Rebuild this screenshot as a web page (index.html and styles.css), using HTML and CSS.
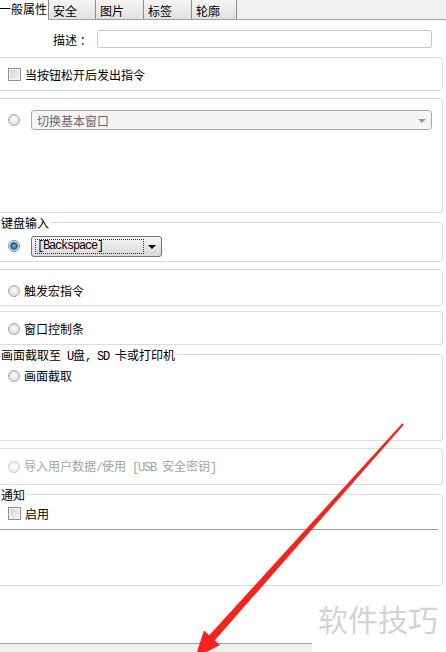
FILE: index.html
```html
<!DOCTYPE html>
<html lang="zh-CN">
<head>
<meta charset="utf-8">
<title>一般属性</title>
<link rel="stylesheet" href="styles.css">
</head>
<body>
<div class="page">
  <div class="tabbar">
    <div class="tab active">一般属性</div>
    <div class="tab t1">安全</div>
    <div class="tab t2">图片</div>
    <div class="tab t3">标签</div>
    <div class="tab t4 last">轮廓</div>
  </div>

  <div class="panel">
    <div class="desc-row">
      <span class="desc-label">描述 ：</span>
      <span class="textbox"></span>
    </div>

    <div class="group g-release">
      <div class="row"><span class="checkbox"></span><span>当按钮松开后发出指令</span></div>
    </div>

    <div class="group g-window">
      <div class="row row-select">
        <span class="radio"></span>
        <div class="select select-wide">切换基本窗口<span class="tri tri-gray"></span></div>
      </div>
    </div>

    <fieldset class="fs fs-kb">
      <legend>键盘输入</legend>
      <div class="row row-select">
        <span class="radio on"></span>
        <div class="select select-kb"><span class="focus"><span class="asc">[Backspace]</span></span><span class="tri tri-black"></span></div>
      </div>
    </fieldset>

    <div class="group g-macro">
      <div class="row"><span class="radio"></span><span>触发宏指令</span></div>
    </div>

    <div class="group g-ctrl">
      <div class="row"><span class="radio"></span><span>窗口控制条</span></div>
    </div>

    <fieldset class="fs fs-shot">
      <legend>画面截取至<span class="asc"> U</span>盘<span class="asc">, SD </span>卡或打印机</legend>
      <div class="row"><span class="radio"></span><span>画面截取</span></div>
    </fieldset>

    <div class="group g-import">
      <div class="row disabled"><span class="radio dis"></span><span>导入用户数据<span class="asc">/</span>使用<span class="asc"> [USB </span>安全密钥<span class="asc">]</span></span></div>
    </div>

    <fieldset class="fs fs-notify">
      <legend>通知</legend>
      <div class="row"><span class="checkbox"></span><span>启用</span></div>
      <div class="sep"></div>
    </fieldset>
  </div>

  <div class="bottom"></div>

  <div class="watermark">软件技巧</div>

  <svg class="arrow" width="446" height="652" viewBox="0 0 446 652">
    <polygon fill="#f2241c" points="402.3,423.3 403.8,424.8 214.4,640.8 208.8,635.8"/>
    <polygon fill="#f2241c" points="195,658 204,630.5 220,645"/>
  </svg>
</div>
</body>
</html>
```

FILE: styles.css
```css
* { box-sizing: border-box; }

html, body {
  margin: 0;
  padding: 0;
  background: #ffffff;
}

body {
  font-family: "Noto Sans CJK SC", "Liberation Sans", sans-serif;
  font-size: 12px;
  color: #000;
  line-height: 13px;
}

.page {
  position: relative;
  width: 446px;
  height: 652px;
  overflow: hidden;
  display: flex;
  flex-direction: column;
}

.asc {
  font-family: "Liberation Mono", "DejaVu Sans Mono", monospace;
  font-size: 12px;
  letter-spacing: -1.2px;
  white-space: pre;
}

/* ---------- tabs ---------- */
.tabbar {
  display: flex;
  height: 20px;
  background: #f0f0f0;
  border-bottom: 1px solid #a0a0a0;
  flex: none;
}

.tab {
  height: 19px;
  padding: 4px 0 0 4px;
  line-height: 13px;
  background: linear-gradient(#f4f4f4, #e1e1e1);
  border-left: 1px solid #8a8a8a;
  white-space: nowrap;
}

.tab.active {
  width: 49px;
  height: 20px;
  padding: 2px 0 0 0;
  margin-left: -1px;
  background: #ffffff;
  border-left: none;
}

.t1 { width: 47px; }
.t2 { width: 48px; }
.t3 { width: 48px; }
.t4 { width: 46px; border-right: 1px solid #8a8a8a; }

/* ---------- panel ---------- */
.panel {
  display: flex;
  flex-direction: column;
  flex: none;
}

.desc-row {
  display: flex;
  align-items: center;
  margin-top: 10px;
  padding-left: 53px;
  height: 18px;
}

.desc-label {
  width: 44px;
  line-height: 13px;
}

.textbox {
  width: 335px;
  height: 18px;
  border: 1px solid #c9c9c9;
  border-radius: 2px;
  background: #fff;
}

.group {
  margin: 0 3px 0 -4px;
  border: 1px solid #d8dde0;
  border-radius: 0 3px 3px 0;
  padding-left: 11px;
}

.row {
  display: flex;
  align-items: center;
  height: 13px;
  gap: 4px;
}

.row-select {
  height: 20px;
  gap: 11px;
}

.g-release { margin-top: 9px; height: 34px; padding-top: 10px; }
.g-window  { margin-top: 7px; height: 115px; padding-top: 11px; }
.g-macro   { margin-top: 7px; height: 37px; padding-top: 14px; }
.g-ctrl    { margin-top: 5px; height: 34px; padding-top: 10px; }
.g-import  { margin-top: 7px; height: 37px; padding-top: 11px; }

.disabled { color: #a3a3a3; }

/* ---------- fieldsets ---------- */
.fs {
  margin: 0 3px 0 -4px;
  min-width: 0;
  border: 1px solid #d8dde0;
  border-radius: 0 3px 3px 0;
  padding: 0;
}

.fs legend {
  padding: 0 2px 0 4px;
  margin: 0;
  line-height: 13px;
  height: 13px;
  white-space: nowrap;
}

.fs .row { margin-left: 11px; }

.fs-kb     { margin-top: 3px; padding-top: 7px; padding-bottom: 5px; }
.fs-shot   { margin-top: 3px; padding-top: 8px; padding-bottom: 58px; }
.fs-notify { margin-top: 3px; padding-top: 6px; padding-bottom: 55px; }

.sep {
  margin: 9px 4px 0 3px;
  height: 1px;
  background: #a0a0a0;
}

/* ---------- controls ---------- */
.radio {
  flex: none;
  width: 12px;
  height: 12px;
  border-radius: 50%;
  border: 1px solid #a9a9a9;
  background: radial-gradient(circle at 50% 45%, #ffffff 0, #e6e6e6 50%, #cccccc 100%);
}

.radio.on {
  border-color: #8c8c8c;
  background: radial-gradient(circle at 50% 50%, #6fc0ee 0, #2a80c0 2px, #1b4f7c 3.4px, #cfd3d6 4px, #f2f2f2 5.5px);
}

.radio.dis {
  border-color: #cfcfcf;
  background: radial-gradient(circle at 50% 45%, #ffffff 0, #f0f0f0 60%, #e2e2e2 100%);
}

.checkbox {
  flex: none;
  width: 13px;
  height: 13px;
  border: 1px solid #8f8f8f;
  box-shadow: inset 0 0 0 1px #f4f4f4;
  background: linear-gradient(135deg, #d2d2d2, #f7f7f7);
}

.select {
  position: relative;
  display: flex;
  align-items: center;
  height: 20px;
  border-radius: 3px;
}

.select-wide {
  width: 401px;
  padding-left: 5px;
  background: #f4f4f4;
  border: 1px solid #aaaaaa;
  color: #6a6a6a;
}

.select-kb {
  width: 131px;
  height: 21px;
  padding-left: 3px;
  background: linear-gradient(#f7f7f7, #e6e6e6 50%, #d9d9d9);
  border: 1px solid #707070;
}

.focus {
  display: flex;
  align-items: center;
  width: 109px;
  height: 15px;
  border: 1px dotted #333;
  padding-left: 1px;
}

.tri {
  position: absolute;
  width: 0;
  height: 0;
  border-left: 4px solid transparent;
  border-right: 4px solid transparent;
}

.tri-gray {
  right: 5px;
  top: 8px;
  border-top: 4px solid #9a9a9a;
}

.tri-black {
  right: 5px;
  top: 8px;
  border-top: 4px solid #000;
}

/* ---------- bottom ---------- */
.bottom {
  margin-top: 57px;
  flex: 1;
  border-top: 1px solid #a0a0a0;
  background: #f0f0f0;
}

.watermark {
  position: absolute;
  left: 312px;
  top: 587px;
  width: 134px;
  height: 65px;
  background: #ffffff;
  padding: 16px 0 0 6px;
  font-size: 30px;
  line-height: 30px;
  color: #d3d3d3;
  white-space: nowrap;
}

.arrow {
  position: absolute;
  left: 0;
  top: 0;
  pointer-events: none;
}
```
